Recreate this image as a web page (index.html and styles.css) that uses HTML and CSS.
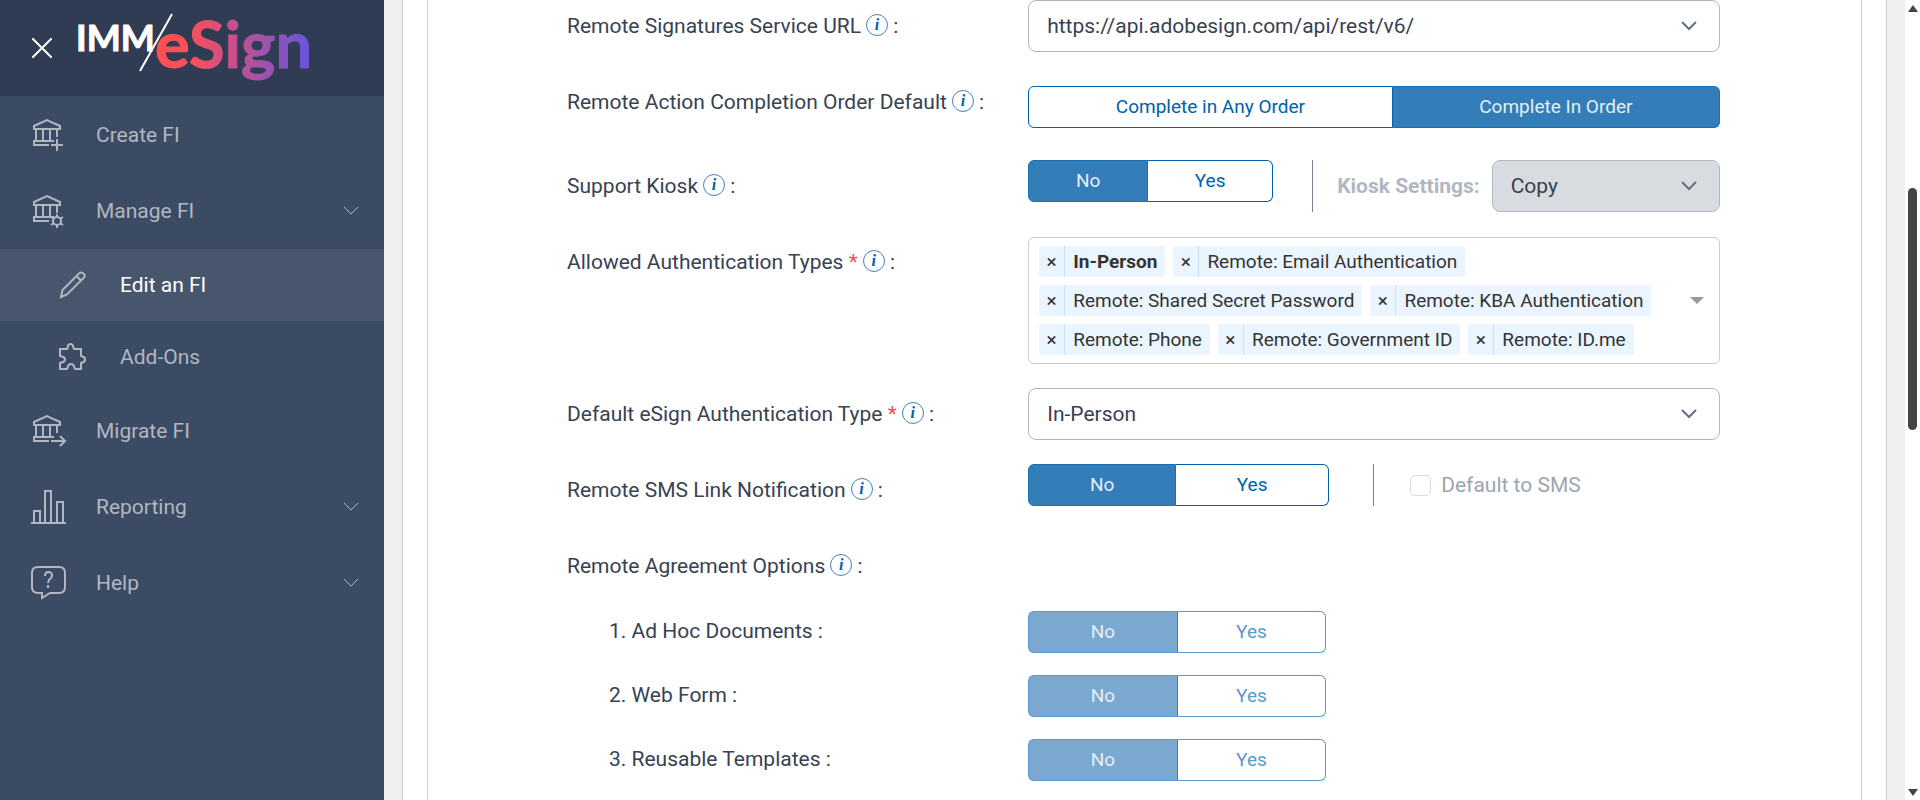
FILE: index.html
```html
<!DOCTYPE html>
<html lang="en">
<head>
  <meta charset="UTF-8">
  <meta name="viewport" content="width=device-width, initial-scale=1.0">
  <title>Edit an FI - IMM eSign</title>
  <link rel="stylesheet" href="styles.css">
</head>
<body>

  <!-- Shared icons -->
  <svg class="sprite" aria-hidden="true">
    <symbol id="bank" viewBox="0 0 34 34">
      <path d="M2 11V8L15 2l13 6v3zM4 11v12M11 11v12M18 11v12M25 11v8M22 23H2v4h15"/>
    </symbol>
    <symbol id="chevron" viewBox="0 0 16 10">
      <path d="M1 1l7 7 7-7"/>
    </symbol>
  </svg>

  <div class="app">
    <aside class="sidebar">
      <div class="brand">
        <button class="close" type="button" aria-label="Close menu">
          <svg width="20" height="20" viewBox="0 0 20 20"><path d="M0 0l20 20M20 0L0 20"/></svg>
        </button>
        <svg class="logo" width="260" height="96" viewBox="0 0 260 96" role="img" aria-label="IMM eSign">
          <defs>
            <linearGradient id="fade" gradientUnits="userSpaceOnUse" x1="80" y1="0" x2="232" y2="0">
              <stop offset="0.2" stop-color="#ff5055"/>
              <stop offset="0.5" stop-color="#c8508a"/>
              <stop offset="1" stop-color="#6a55da"/>
            </linearGradient>
          </defs>
          <path d="M64 71L96 14" stroke="#fff" stroke-width="2"/>
          <text class="logo-imm" x="0" y="51">IMM</text>
          <text class="logo-esign" x="79" y="68" fill="url(#fade)" stroke="url(#fade)">eSign</text>
        </svg>
      </div>

      <nav class="menu">
        <a class="item" href="#">
          <svg class="icon" width="34" height="34"><use href="#bank"/><path d="M25 21v12M19 27h12"/></svg>
          <span>Create FI</span>
        </a>
        <a class="item" href="#">
          <svg class="icon" width="34" height="34"><use href="#bank"/><circle cx="25" cy="27" r="4"/><path d="M25 20v3M25 31v3M19 23l3 2M28 29l3 2M19 31l3-2M28 25l3-2"/></svg>
          <span>Manage FI</span>
          <svg class="caret" width="16" height="10"><use href="#chevron"/></svg>
        </a>
        <a class="item sub active" href="#">
          <svg class="icon" width="28" height="28" viewBox="0 0 28 28"><path d="M2 26l1.500-7L20 2.500q2-2 4.500 0t0 4.500L8 23.500zM17.500 5l5 5"/></svg>
          <span>Edit an FI</span>
        </a>
        <a class="item sub" href="#">
          <svg class="icon" width="28" height="28" viewBox="0 0 28 28"><path d="M1 6h7c1-1 0-5 3.500-5s2.500 4 3.500 5h7v7c1 1 4 0 4 3.500s-3 2.500-4 3.500v6h-6c-1-1 0-5-4-5s-3 4-4 5H1v-6c1-1 5 0 5-3.500s-4-2.500-5-3.500z"/></svg>
          <span>Add-Ons</span>
        </a>
        <a class="item" href="#">
          <svg class="icon" width="34" height="34"><use href="#bank"/><path d="M19 27h14M28 22l5 5-5 5"/></svg>
          <span>Migrate FI</span>
        </a>
        <a class="item" href="#">
          <svg class="icon" width="34" height="34"><path d="M-1 33h35M2 32V21h6v11M13 32V1h6v31M25 32V12h6v20"/></svg>
          <span>Reporting</span>
          <svg class="caret" width="16" height="10"><use href="#chevron"/></svg>
        </a>
        <a class="item" href="#">
          <svg class="icon" width="34" height="34"><path d="M6 1h21q6 0 6 6v14q0 6-6 6h-9l-8 5v-5H6q-6 0-6-6V7q0-6 6-6z"/><path d="M13 10q0-4 3.500-4t3.500 3.500q0 2-2 3.500t-2 4M16 19v3"/></svg>
          <span>Help</span>
          <svg class="caret" width="16" height="10"><use href="#chevron"/></svg>
        </a>
      </nav>
    </aside>

    <main class="content">
      <div class="card">
        <form class="panel">

          <div class="row">
            <div class="label"><label for="url">Remote Signatures Service URL</label><button class="info" type="button">i</button> :</div>
            <div class="field">
              <div class="select">
                <select id="url"><option>https://api.adobesign.com/api/rest/v6/</option></select>
                <svg width="16" height="10"><use href="#chevron"/></svg>
              </div>
            </div>
          </div>

          <div class="row">
            <div class="label"><span>Remote Action Completion Order Default</span><button class="info" type="button">i</button> :</div>
            <div class="field order">
              <div class="toggle">
                <button type="button">Complete in Any Order</button>
                <button type="button" class="on">Complete In Order</button>
              </div>
            </div>
          </div>

          <div class="row">
            <div class="label"><span>Support Kiosk</span><button class="info" type="button">i</button> :</div>
            <div class="field">
              <div class="toggle kiosk">
                <button type="button" class="on">No</button>
                <button type="button">Yes</button>
              </div>
              <div class="kiosk-settings">
                <label for="kiosk">Kiosk Settings:</label>
                <div class="select disabled">
                  <select id="kiosk" disabled><option>Copy</option></select>
                  <svg width="16" height="10"><use href="#chevron"/></svg>
                </div>
              </div>
            </div>
          </div>

          <div class="row">
            <div class="label"><span>Allowed Authentication Types <b>*</b></span><button class="info" type="button">i</button> :</div>
            <div class="field">
              <div class="tags">
                <ul>
                  <li class="locked"><button type="button">×</button><span>In-Person</span></li>
                  <li><button type="button">×</button><span>Remote: Email Authentication</span></li>
                  <li><button type="button">×</button><span>Remote: Shared Secret Password</span></li>
                  <li><button type="button">×</button><span>Remote: KBA Authentication</span></li>
                  <li><button type="button">×</button><span>Remote: Phone</span></li>
                  <li><button type="button">×</button><span>Remote: Government ID</span></li>
                  <li><button type="button">×</button><span>Remote: ID.me</span></li>
                </ul>
                <i class="arrow"></i>
              </div>
            </div>
          </div>

          <div class="row">
            <div class="label"><label for="auth">Default eSign Authentication Type <b>*</b></label><button class="info" type="button">i</button> :</div>
            <div class="field">
              <div class="select">
                <select id="auth"><option>In-Person</option></select>
                <svg width="16" height="10"><use href="#chevron"/></svg>
              </div>
            </div>
          </div>

          <div class="row">
            <div class="label"><span>Remote SMS Link Notification</span><button class="info" type="button">i</button> :</div>
            <div class="field">
              <div class="toggle sms">
                <button type="button" class="on">No</button>
                <button type="button">Yes</button>
              </div>
              <label class="check"><input type="checkbox" disabled> Default to SMS</label>
            </div>
          </div>

          <div class="row heading">
            <div class="label"><span>Remote Agreement Options</span><button class="info" type="button">i</button> :</div>
          </div>

          <div class="row option">
            <div class="label">1. Ad Hoc Documents :</div>
            <div class="field">
              <div class="toggle half">
                <button type="button" class="on" disabled>No</button>
                <button type="button" disabled>Yes</button>
              </div>
            </div>
          </div>

          <div class="row option">
            <div class="label">2. Web Form :</div>
            <div class="field">
              <div class="toggle half">
                <button type="button" class="on" disabled>No</button>
                <button type="button" disabled>Yes</button>
              </div>
            </div>
          </div>

          <div class="row option">
            <div class="label">3. Reusable Templates :</div>
            <div class="field">
              <div class="toggle half">
                <button type="button" class="on" disabled>No</button>
                <button type="button" disabled>Yes</button>
              </div>
            </div>
          </div>

        </form>
      </div>
    </main>

    <div class="scrollbar">
      <i class="up"></i>
      <i class="thumb"></i>
      <i class="down"></i>
    </div>
  </div>

</body>
</html>
```
FILE: styles.css
```css
* { box-sizing: border-box; }

body {
  margin: 0;
  font-family: Roboto, sans-serif;
  font-size: 21px;
  line-height: 24px;
  color: #374253;
  background-color: #fff;
}

button, select {
  font: inherit;
  color: inherit;
}

svg {
  fill: none;
  stroke: currentColor;
}

.sprite {
  position: absolute;
  width: 0;
  height: 0;
}

.app {
  display: flex;
  height: 100vh;
  overflow: hidden;
}

/* Sidebar */
.sidebar {
  flex: none;
  width: 384px;
  background-color: #3c4b64;
  color: #b1b7c1;
}

.brand {
  display: flex;
  align-items: center;
  height: 96px;
  padding-left: 32px;
  background-color: #303c54;
}

.close {
  width: 20px;
  height: 20px;
  margin-right: 24px;
  padding: 0;
  border: 0;
  background: none;
  color: #fff;
}

.close svg {
  display: block;
  stroke-width: 2;
}

.logo {
  overflow: visible;
}

.logo text {
  font-family: Lato, sans-serif;
  font-weight: 700;
}

.logo-imm {
  font-size: 36px;
  fill: #fff;
  stroke: #fff;
}

.logo-esign {
  font-size: 65px;
}

.menu {
  padding-top: 1px;
}

.item {
  display: flex;
  align-items: center;
  height: 76px;
  padding: 0 25px 0 32px;
  color: inherit;
  text-decoration: none;
}

.item .icon {
  flex: none;
  margin-right: 30px;
  overflow: visible;
  stroke-width: 2;
}

.caret {
  margin-left: auto;
}

.sub {
  height: 72px;
  padding-left: 59px;
}

.sub .icon {
  margin-right: 33px;
}

.active {
  background-color: #48566d;
}

.active span {
  color: #fff;
}

/* Content */
.content {
  flex: 1;
  padding: 0 18px;
  background-color: #f0f0f0;
}

.card {
  height: 100%;
  padding: 0 24px;
  border: solid #ccc;
  border-width: 0 1px;
  background-color: #fff;
}

.panel {
  height: 100%;
  padding: 0 141px 0 139px;
  border: solid #ccc;
  border-width: 0 1px;
}

.row {
  display: flex;
  min-height: 76px;
  padding-bottom: 24px;
}

.label {
  flex: none;
  width: 40%;
  padding-top: 14px;
}

.label b {
  color: #e55353;
  font-weight: 400;
}

.field {
  display: flex;
  flex: 1;
  align-items: flex-start;
}

.info {
  width: 22px;
  height: 22px;
  margin-left: 5px;
  padding: 0;
  border: 1px solid #3f86bd;
  border-radius: 50%;
  background: none;
  color: #0061aa;
  font: italic bold 16px/18px "Liberation Serif", serif;
  vertical-align: 3px;
}

.select {
  position: relative;
  flex: 1;
}

.select select {
  display: block;
  width: 100%;
  height: 52px;
  padding: 0 18px;
  border: 1px solid #b1b7c1;
  border-radius: 8px;
  background-color: #fff;
  appearance: none;
}

.select svg {
  position: absolute;
  top: 21px;
  right: 23px;
  color: #636f83;
  stroke-width: 2;
}

.select.disabled select {
  background-color: #d8dbe0;
  opacity: 1;
}

/* No / Yes toggles */
.toggle {
  display: flex;
  flex: none;
}

.toggle button {
  flex: 1 1 auto;
  height: 42px;
  padding: 0;
  border: 1px solid #0061aa;
  background-color: #fff;
  color: #0061aa;
  font-size: 19px;
}

.toggle button:first-child {
  border-radius: 6px 0 0 6px;
}

.toggle button:last-child {
  border-left: 0;
  border-radius: 0 6px 6px 0;
}

.toggle .on {
  background-color: #337db8;
  border-color: #1a6fb2;
  color: #e6eff6;
}

.toggle button:disabled {
  border-color: #5a9acb;
  color: #5a9acb;
}

.toggle .on:disabled {
  background-color: #7aa8d1;
  border-right-color: #337db8;
  color: #e6eff6;
}

.order {
  padding: 10px 0 8px;
}

.order .toggle {
  flex: 1;
}

.kiosk {
  width: 245px;
}

.sms {
  width: 301px;
}

.half {
  width: 298px;
}

.half button {
  flex: 1 1 0;
}

.kiosk-settings {
  display: flex;
  flex: 1;
  align-items: center;
  margin-left: 39px;
  padding-left: 24px;
  border-left: 1px solid #768192;
}

.kiosk-settings label {
  margin-right: 12px;
  color: #b1b7c1;
  font-weight: 700;
}

.check {
  display: flex;
  align-items: center;
  height: 42px;
  margin-left: 44px;
  padding-left: 36px;
  border-left: 1px solid #768192;
  color: #9da5b1;
}

.check input {
  width: 21px;
  height: 21px;
  margin: 0 10px 0 0;
  border: 1px solid #d8dbe0;
  border-radius: 5px;
  background-color: #fff;
  appearance: none;
}

/* Multi select */
.tags {
  display: flex;
  flex: 1;
  align-items: center;
  margin-top: 1px;
  padding: 8px 15px 8px 10px;
  border: 1px solid #ccc;
  border-radius: 6px;
}

.tags ul {
  display: flex;
  flex: 1;
  flex-wrap: wrap;
  gap: 8px;
  margin: 0;
  padding: 0;
  list-style: none;
}

.tags li {
  display: flex;
  height: 31px;
  border-radius: 3px;
  background-color: #ebf5ff;
  color: #333;
  font-size: 19px;
  line-height: 31px;
}

.tags li button {
  width: 26px;
  padding: 0;
  border: 0;
  border-right: 1px solid #c2e0ff;
  background: none;
}

.tags li span {
  padding: 0 8px;
}

.locked span {
  font-weight: 700;
}

.arrow {
  border: solid transparent;
  border-width: 7px 7px 0;
  border-top-color: #999;
}

.heading {
  min-height: 71px;
}

.option {
  min-height: 64px;
  padding-bottom: 22px;
}

.option .label {
  padding: 8px 0 0 42px;
}

/* Scroll track */
.scrollbar {
  display: flex;
  flex: none;
  flex-direction: column;
  align-items: center;
  width: 15px;
  padding: 5px 0 4px;
}

.up, .down {
  border: solid transparent;
  border-width: 0 5px 7px;
  border-bottom-color: #444;
}

.down {
  margin-top: auto;
  border-width: 7px 5px 0;
  border-top-color: #444;
}

.thumb {
  width: 9px;
  height: 242px;
  margin-top: 176px;
  border-radius: 5px;
  background-color: #444;
}
```
